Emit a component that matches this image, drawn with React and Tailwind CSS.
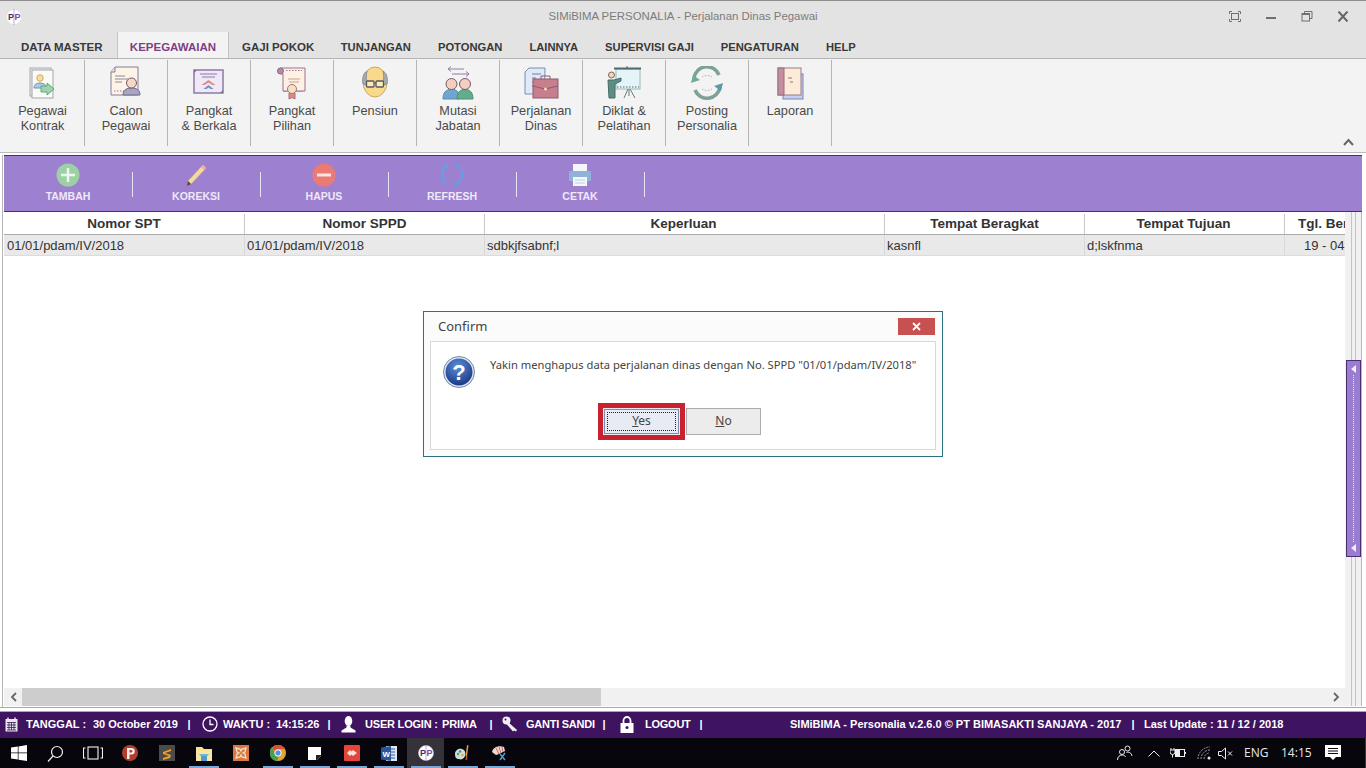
import React from "react";

const I = ({ w = 36, h = 36, vb, className = "", children }) => (
  <svg width={w} height={h} viewBox={vb || `0 0 ${w} ${h}`} className={"shrink-0 " + className} fill="none">
    {children}
  </svg>
);

const PegawaiKontrak = () => (
  <I w={36} h={34}>
    <rect x="5" y="2" width="21" height="28" fill="#e6e9ea" stroke="#a9acb0" />
    <rect x="7" y="4" width="21" height="28" fill="#fbfbf6" stroke="#9fa6ad" />
    <circle cx="15" cy="12" r="3.2" fill="#f5dfa8" stroke="#d3a94f" />
    <path d="M9 22c0-4 3-5 6-5s5 1 6 3l-1 2z" fill="#a8cbe4" stroke="#6d96b8" />
    <path d="M16 20h6v-3l7 6-7 6v-3h-6z" fill="#9fd3ac" stroke="#62a47c" />
  </I>
);
const CalonPegawai = () => (
  <I w={36} h={34}>
    <path d="M7 1h23v28H3V6z" fill="#fdf3e7" stroke="#8a7a96" />
    <path d="M7 1v5H3" fill="#e8e2ee" stroke="#8a7a96" />
    <path d="M7 10h10M7 13h13M7 16h7" stroke="#8a8a9a" />
    <path d="M6 25h10" stroke="#8a7a96" strokeDasharray="1.5 1.5" />
    <path d="M15 29c0-5 3-6 6-7h5c3 1 6 2 6 7z" fill="#a9a4c0" stroke="#6e6a88" />
    <circle cx="23.500" cy="17" r="5" fill="#f4d8c8" stroke="#6e5a66" />
  </I>
);
const PangkatBerkala = () => (
  <I w={36} h={30}>
    <rect x="3" y="2" width="29" height="23" fill="#efe9f7" stroke="#8d7aa8" strokeWidth="1.500" />
    <path d="M9 6h17M11 9h13" stroke="#8d7aa8" />
    <path d="M17.500 12l7 5-3 0-4-2.500-4 2.500-3 0z" fill="#d98a82" />
    <path d="M17.500 17l5 4h-3l-2-1.500-2 1.500h-3z" fill="#6a93c6" />
    <path d="M29 25h3v-3zM3 5V2h3z" fill="#7d6a8e" />
  </I>
);
const PangkatPilihan = () => (
  <I w={36} h={34}>
    <path d="M7 2h24v23H9" fill="#fdf1e6" stroke="#a0708c" />
    <path d="M7 2a3 3 0 0 0-3 3c0 2 2 3 5 3V25h20" fill="#fdf1e6" stroke="#a0708c" />
    <circle cx="6.500" cy="5" r="3" fill="#b58aa6" stroke="#8c6a8c" />
    <path d="M12 4.500h16" stroke="#a0708c" strokeDasharray="1.500 1.500" />
    <path d="M14 13h12M15 16h10" stroke="#d0a080" />
    <path d="M15 27h6v6l-3-1.500-3 1.500z" fill="#e08a80" stroke="#a0708c" />
    <circle cx="18" cy="23" r="4.500" fill="#f7e2c0" stroke="#a0708c" />
  </I>
);
const Pensiun = () => (
  <I w={30} h={34}>
    <ellipse cx="15" cy="16" rx="12" ry="15" fill="#f9d98c" stroke="#c9a85e" />
    <path d="M3 18c-1-8 1-11 4-13-1 4-1 9 0 14zM27 18c1-8-1-11-4-13 1 4 1 9 0 14z" fill="#a5aeb0" stroke="#8a8f90" />
    <rect x="6.500" y="15" width="7.500" height="6" rx="1" stroke="#55585c" strokeWidth="1.300" fill="#fce9b8" />
    <rect x="16" y="15" width="7.500" height="6" rx="1" stroke="#55585c" strokeWidth="1.300" fill="#fce9b8" />
    <path d="M14 17h2" stroke="#55585c" />
  </I>
);
const Mutasi = () => (
  <I w={36} h={36}>
    <path d="M8 4h16M8 4l3-2.500M8 4l3 2.500" stroke="#8a8496" />
    <path d="M12 9h17M29 9l-3-2.500M29 9l-3 2.500" stroke="#8a78b0" />
    <path d="M3 34c0-7 3-9 8-10 4 0 7 2 8 5v5z" fill="#6ea6cf" stroke="#5e8eae" />
    <path d="M17 34c0-7 3-9 8-10 5 1 8 3 8 10z" fill="#62ad8d" stroke="#4e9275" />
    <circle cx="11.500" cy="19" r="5.500" fill="#f2cfc0" stroke="#7b5a60" />
    <circle cx="25" cy="19" r="5.500" fill="#f2cfc0" stroke="#7b5a60" />
  </I>
);
const PerjalananIcon = () => (
  <I w={36} h={34}>
    <path d="M6 2h16l-.5 26H2V6z" fill="#dfe9f8" stroke="#7b8eae" />
    <path d="M9 8h9M9 12h4M9 16h4M9 20h4" stroke="#6d7f9e" />
    <rect x="10" y="13" width="25" height="19" fill="#c77f8e" stroke="#8d5a6e" />
    <path d="M18 13v-3h9v3" stroke="#8d5a6e" />
    <path d="M10 20l12 3 13-3" stroke="#8d5a6e" />
    <circle cx="22.500" cy="23" r="1.500" fill="#f5dfa8" />
  </I>
);
const Diklat = () => (
  <I w={36} h={34}>
    <rect x="10" y="3" width="24" height="20" fill="#e4f4f8" stroke="#99bbbb" />
    <path d="M8 2.500h27" stroke="#4e6a68" strokeWidth="2" />
    <path d="M21 0v3" stroke="#4e6a68" />
    <path d="M11 21h22" stroke="#4e6a68" strokeDasharray="1.500 1.500" />
    <path d="M22 23l-4 9M24 23l5 9M23 23v7" stroke="#6a7a78" />
    <circle cx="5.500" cy="9" r="3" fill="#f2d6bc" stroke="#7a6a5a" />
    <path d="M2 14h6l7-2v3l-6 3v14H3z" fill="#5d8c84" stroke="#446e68" />
  </I>
);
const Posting = () => (
  <I w={34} h={34}>
    <path d="M4 12a13 13 0 0 1 25-3" stroke="#7da099" strokeWidth="3.500" />
    <path d="M30 21a13 13 0 0 1-25 3" stroke="#7da099" strokeWidth="3.500" />
    <path d="M1 17l2-8 7 5z" fill="#6bae95" />
    <path d="M33 17l-2 8-7-5z" fill="#5e9aa6" />
    <path d="M12 11a9 9 0 0 1 10 0M12 23a9 9 0 0 0 10 0" stroke="#a0a8a8" strokeDasharray="1.500 1.500" />
  </I>
);
const Laporan = () => (
  <I w={30} h={34}>
    <rect x="8" y="8" width="20" height="25" fill="#c6cff0" stroke="#7a86b0" />
    <rect x="3" y="2" width="23" height="27" fill="#fcebd8" stroke="#9a7a8a" />
    <rect x="3" y="2" width="6" height="27" fill="#c58ea0" stroke="#9a6a80" />
    <path d="M13 12h4M15 16h3" stroke="#8a7a7a" />
  </I>
);

const ribbon = [
  ["Pegawai", "Kontrak", PegawaiKontrak, "w-[84px]"],
  ["Calon", "Pegawai", CalonPegawai, "w-[83px]"],
  ["Pangkat", "& Berkala", PangkatBerkala, "w-[83px]"],
  ["Pangkat", "Pilihan", PangkatPilihan, "w-[83px]"],
  ["Pensiun", "", Pensiun, "w-[83px]"],
  ["Mutasi", "Jabatan", Mutasi, "w-[83px]"],
  ["Perjalanan", "Dinas", PerjalananIcon, "w-[83px]"],
  ["Diklat &", "Pelatihan", Diklat, "w-[83px]"],
  ["Posting", "Personalia", Posting, "w-[83px]"],
  ["Laporan", "", Laporan, "w-[83px]"],
];

const tabs = ["GAJI POKOK", "TUNJANGAN", "POTONGAN", "LAINNYA", "SUPERVISI GAJI", "PENGATURAN", "HELP"];

const Logo = ({ s = 16 }) => (
  <svg width={s} height={s} viewBox="0 0 16 16" className="shrink-0">
    <circle cx="8" cy="8" r="7.500" fill="#fff" stroke="#e0d8e8" strokeWidth="0.500" />
    <path d="M8 0.500V15.500" stroke="#6a3f8e" strokeWidth="0.700" strokeDasharray="1.200 0.800" />
    <text x="2" y="11" fontSize="9" fontWeight="700" fontFamily="Liberation Sans" fill="#4a2a6e">P</text>
    <text x="8.500" y="11" fontSize="9" fontWeight="700" fontFamily="Liberation Sans" fill="#7b4aa0">P</text>
  </svg>
);

const ToolBtn = ({ label, children }) => (
  <div className="w-[128px] h-full flex flex-col items-center relative">
    <div className="h-[24px] mt-[7px] flex items-center justify-center">{children}</div>
    <div className="mt-[2px] text-[10.500px] leading-[14px] font-bold text-[#efe8f8]">{label}</div>
  </div>
);

const ToolSep = () => <div className="w-px h-[25px] bg-[#e8e2f2] self-center shrink-0 -mr-px mt-[2px]" />;

const Task = ({ children, active, bar }) => (
  <div className={"w-[37px] h-[30px] relative flex items-center justify-center " + (active ? "bg-[#35323a]" : "")}>
    {children}
    {bar && <div className="absolute left-[4px] right-[3px] bottom-0 h-[2px] bg-[#78a6d6]" />}
  </div>
);

const StatusSep = ({ cls }) => <span className={"text-center " + cls}>|</span>;

export default function App() {
  return (
    <div className="w-[1366px] h-[768px] relative flex flex-col overflow-hidden bg-[#f3f3f3] text-[#333] [font-family:'Liberation_Sans',Arial,sans-serif]">
      {/* Title bar */}
      <div className="h-[32px] shrink-0 bg-[#e3e3e3] border-t border-[#8e8e8e] flex items-center pl-[6px] pr-[17px] relative">
        <Logo s={16} />
        <div className="absolute inset-x-0 top-[8px] text-center text-[11.400px] leading-[15px] text-[#7b7b7b]">
          SIMiBIMA PERSONALIA - Perjalanan Dinas Pegawai
        </div>
        <div className="ml-auto flex items-center gap-[24px]">
          <svg width="12" height="11" viewBox="0 0 12 11" fill="none" stroke="#6f6f6f"><path d="M0.500 3V0.500H3M9 0.500h2.500V3M11.500 8v2.500H9M3 10.500H0.500V8" /><rect x="2.500" y="2.500" width="7" height="6" /></svg>
          <svg width="12" height="11" viewBox="0 0 12 11" fill="none" stroke="#6f6f6f" strokeWidth="2"><path d="M1 7h10" /></svg>
          <svg width="12" height="11" viewBox="0 0 12 11" fill="none" stroke="#6f6f6f"><rect x="1" y="2.500" width="7.500" height="7.500" /><path d="M3.500 2.500V0.500h7.500v7h-2.500" /><path d="M1 3.500h7.500" /></svg>
          <svg width="12" height="11" viewBox="0 0 12 11" fill="none" stroke="#666" strokeWidth="2"><path d="M1.500 0.500l9 10M10.500 0.500l-9 10" /></svg>
        </div>
      </div>

      {/* Tabs */}
      <div className="h-[27px] shrink-0 bg-[#e3e3e3] border-b border-[#b4b4b4] flex pl-[8px] text-[11.500px] font-bold text-[#383838]">
        <div className="w-[109px] pl-[13px] pt-[7px] whitespace-nowrap">DATA MASTER</div>
        <div className="w-[112px] h-[27px] bg-[#f3f3f3] border border-b-0 border-[#c4c4c4] text-center pt-[7px] text-[#7d3f86] -mt-px">KEPEGAWAIAN</div>
        <div className="pl-[13px] pr-[13px] pt-[7px] whitespace-nowrap">{tabs[0]}</div>
        {tabs.slice(1).map((t) => (
          <div key={t} className="px-[13.500px] pt-[7px] whitespace-nowrap text-[11.200px]">{t}</div>
        ))}
      </div>

      {/* Ribbon */}
      <div className="h-[94px] shrink-0 bg-[#f3f3f3] border-b border-[#b9b9b9] flex pl-px pt-px">
        {ribbon.map(([a, b, Ic, w]) => (
          <div key={a + b} className={"h-[86px] border-r border-[#b5b5b5] flex flex-col items-center text-[12.700px] leading-[15px] text-[#4a4a4a] " + w}>
            <div className="h-[38px] mt-[4px] flex items-center justify-center"><Ic /></div>
            <div className="mt-[2px]">{a}</div>
            {b && <div>{b}</div>}
          </div>
        ))}
        <div className="ml-auto mr-[12px] self-end mb-[6px]">
          <svg width="11" height="8" viewBox="0 0 11 8" fill="none" stroke="#666" strokeWidth="2"><path d="M1 7l4.500-5L10 7" /></svg>
        </div>
      </div>

      {/* Main */}
      <div className="flex-1 min-h-0 flex flex-col bg-white pl-[2px] pr-[2px] pt-[2px]">
        <div className="flex-1 min-h-0 flex flex-col border-l border-[#b4b4b4] pl-px pr-[2px]">
          <div className="h-[57px] shrink-0 bg-[#9e80d0] border-y border-[#4b2d70] flex">
            <ToolBtn label="TAMBAH">
              <svg width="24" height="24" viewBox="0 0 24 24"><circle cx="12" cy="12" r="11.500" fill="#9dd1a4" /><path d="M12 5v14M5 12h14" stroke="#eef8ee" strokeWidth="2.500" /></svg>
            </ToolBtn>
            <ToolSep />
            <ToolBtn label="KOREKSI">
              <svg width="24" height="24" viewBox="0 0 24 24"><path d="M4 18L19 2l3 3L7 21z" fill="#f3d9a0" stroke="#d9bf88" strokeWidth="0.500" /><path d="M19 2l3 3-2 2-3-3z" fill="#f2a9a0" /><path d="M4 18l3 3-4 2z" fill="#5a4a40" /></svg>
            </ToolBtn>
            <ToolSep />
            <ToolBtn label="HAPUS">
              <svg width="24" height="24" viewBox="0 0 24 24"><circle cx="12" cy="12" r="11.500" fill="#ea7a74" /><path d="M5 12h14" stroke="#f9e4e0" strokeWidth="3" /></svg>
            </ToolBtn>
            <ToolSep />
            <ToolBtn label="REFRESH">
              <svg width="24" height="24" viewBox="0 0 24 24" fill="none" stroke="#5da2e6" strokeWidth="1.800"><path d="M6 3.500a11 11 0 0 0 0 17" /><path d="M14 1.500a10.500 10.500 0 0 1 2 20" /><path d="M4 1.500l3 1-.5 3M18 23l-3-1 .5-3" /></svg>
            </ToolBtn>
            <ToolSep />
            <ToolBtn label="CETAK">
              <svg width="24" height="24" viewBox="0 0 24 24"><rect x="5" y="1" width="14" height="8" fill="#f4f6fa" /><rect x="1" y="8" width="22" height="10" rx="1" fill="#8fb3d8" /><rect x="5" y="14" width="14" height="9" fill="#f4f6fa" /><path d="M7 17h10M7 20h10" stroke="#c4cedc" /></svg>
            </ToolBtn>
            <ToolSep />
          </div>

          <div className="flex-1 min-h-0 flex">
            <div className="w-[1341px] shrink-0 flex flex-col">
              <div className="h-[23px] shrink-0 flex border-b border-[#aaaaaa] bg-white text-[13.500px] font-bold text-[#333] leading-[20px] pt-[2px]">
                <div className="w-[241px] shrink-0 text-center border-r border-[#c8c8c8]">Nomor SPT</div>
                <div className="w-[240px] shrink-0 text-center border-r border-[#c8c8c8]">Nomor SPPD</div>
                <div className="w-[400px] shrink-0 text-center border-r border-[#c8c8c8] pr-[2px]">Keperluan</div>
                <div className="w-[200px] shrink-0 text-center border-r border-[#c8c8c8]">Tempat Beragkat</div>
                <div className="w-[200px] shrink-0 text-center border-r border-[#c8c8c8] pr-[2px]">Tempat Tujuan</div>
                <div className="flex-1 overflow-hidden whitespace-nowrap pl-[13px]">Tgl. Berangkat</div>
              </div>
              <div className="h-[21px] shrink-0 flex border-b border-[#dcdcdc] bg-[#e9e9e9] text-[13px] text-[#333] leading-[21px]">
                <div className="w-[241px] shrink-0 pl-[3px] border-r border-[#d8d8d8]">01/01/pdam/IV/2018</div>
                <div className="w-[240px] shrink-0 pl-[2px] border-r border-[#d8d8d8]">01/01/pdam/IV/2018</div>
                <div className="w-[400px] shrink-0 pl-[2px] border-r border-[#d8d8d8]">sdbkjfsabnf;l</div>
                <div className="w-[200px] shrink-0 pl-[2px] border-r border-[#d8d8d8]">kasnfl</div>
                <div className="w-[200px] shrink-0 pl-[2px] border-r border-[#d8d8d8]">d;lskfnma</div>
                <div className="flex-1 overflow-hidden whitespace-nowrap pl-[19px]">19 - 04 - 2018</div>
              </div>
              <div className="flex-1" />
              <div className="h-[18px] shrink-0 bg-[#f1f1f1] flex items-center mb-px">
                <div className="w-[18px] flex justify-center">
                  <svg width="7" height="10" viewBox="0 0 7 10" fill="none" stroke="#666" strokeWidth="1.800"><path d="M6 1L2 5l4 4" /></svg>
                </div>
                <div className="w-[579px] h-full bg-[#cdcdcd]" />
                <div className="ml-auto w-[18px] flex justify-center">
                  <svg width="7" height="10" viewBox="0 0 7 10" fill="none" stroke="#666" strokeWidth="1.800"><path d="M1 1l4 4-4 4" /></svg>
                </div>
              </div>
            </div>
            <div className="flex-1 bg-[#f1f1f1] border-r border-[#b8b8b8] flex justify-center relative mb-px">
              <div className="w-px h-full bg-[#c4c4c4] mr-[3px]" />
              <div className="w-px h-full bg-[#c4c4c4]" />
              <div className="absolute left-[1px] top-[148px] w-[15px] h-[197px] bg-[#9a7dd0] border border-[#4b2d70] flex flex-col items-center justify-between py-[4px]">
                <svg width="5" height="8" viewBox="0 0 5 8"><path d="M5 0v8L0 4z" fill="#f2edf8" /></svg>
                <div className="w-px flex-1 my-[2px] border-l border-dotted border-[#eee8f8]" />
                <svg width="5" height="8" viewBox="0 0 5 8"><path d="M5 0v8L0 4z" fill="#f2edf8" /></svg>
              </div>
            </div>
          </div>
        </div>
        <div className="h-[5px] shrink-0 border-y border-[#a8a8a8] bg-white -mx-[2px]" />
      </div>

      {/* Status bar */}
      <div className="h-[26px] pb-[2px] shrink-0 bg-[#3e1360] text-white text-[11px] font-bold flex items-center whitespace-nowrap leading-[14px]">
        <div className="w-[790px] shrink-0 flex items-center pl-[5px]">
          <svg width="13" height="15" viewBox="0 0 13 15" className="shrink-0"><rect x="0.500" y="2" width="12" height="12.500" fill="#e8e6ec" /><path d="M3 0.500v3M10 0.500v3" stroke="#e8e6ec" strokeWidth="1.500" /><path d="M2 5.500h9M2 8h9M2 10.500h9M2 13h9M4 5.500v7.500M6.500 5.500v7.500M9 5.500v7.500" stroke="#3e1360" strokeWidth="0.800" /></svg>
          <span className="w-[67px] ml-[8px] shrink-0">TANGGAL :</span>
          <span className="w-[90px] shrink-0">30 October 2019</span>
          <StatusSep cls="w-[12px] shrink-0" />
          <svg width="16" height="16" viewBox="0 0 16 16" fill="none" stroke="#fff" strokeWidth="1.300" className="shrink-0 ml-[7px]"><circle cx="8" cy="8" r="7" /><path d="M8 3.500V8.500h3.500" /></svg>
          <span className="w-[53px] ml-[5px] shrink-0">WAKTU :</span>
          <span className="w-[48px] shrink-0 tracking-[-0.1px]">14:15:26</span>
          <StatusSep cls="w-[10px] shrink-0" />
          <svg width="15" height="17" viewBox="0 0 15 17" fill="#fff" className="shrink-0 ml-[7px]"><ellipse cx="7.500" cy="5" rx="3.800" ry="5" /><path d="M5.500 9.500h4v2l5 3v2H0.500v-2l5-3z" /></svg>
          <span className="w-[77px] ml-[9px] shrink-0 tracking-[-0.2px]">USER LOGIN :</span>
          <span className="w-[44px] shrink-0 tracking-[-0.1px]">PRIMA</span>
          <StatusSep cls="w-[10px] shrink-0" />
          <svg width="16" height="16" viewBox="0 0 16 16" className="shrink-0 ml-[6px]"><circle cx="4.500" cy="4.500" r="4" fill="#f0f0f0" /><path d="M6 6l9 8-1 1.500-2-1-1 1L4.500 8z" fill="#f0f0f0" /><circle cx="3.500" cy="3.500" r="1" fill="#3e1360" /></svg>
          <span className="w-[73px] ml-[8px] shrink-0 tracking-[-0.25px]">GANTI SANDI</span>
          <StatusSep cls="w-[10px] shrink-0" />
          <svg width="14" height="17" viewBox="0 0 14 17" className="shrink-0 ml-[11px]"><path d="M3.500 7V4.500a3.500 3.500 0 0 1 7 0V7" fill="none" stroke="#fff" strokeWidth="1.800" /><rect x="0.500" y="7" width="13" height="10" fill="#fff" /><circle cx="7" cy="11.500" r="1.500" fill="#3e1360" /></svg>
          <span className="w-[51px] ml-[11px] shrink-0 tracking-[-0.25px]">LOGOUT</span>
          <StatusSep cls="w-[10px] shrink-0" />
        </div>
        <span className="w-[338px] shrink-0">SIMiBIMA - Personalia v.2.6.0 © PT BIMASAKTI SANJAYA - 2017</span>
        <StatusSep cls="w-[10px] shrink-0" />
        <span className="ml-[6px]">Last Update : 11 / 12 / 2018</span>
      </div>

      {/* Taskbar */}
      <div className="h-[30px] shrink-0 bg-[#07060c] flex items-center text-white">
        <Task><svg width="16" height="16" viewBox="0 0 16 16" fill="#fff"><path d="M0 2.500l6.800-1v6H0zM7.500 1.400L16 0v7.500H7.500zM0 8.300h6.800v6.200L0 13.500zM7.500 8.300H16V16l-8.500-1.300z" /></svg></Task>
        <Task><svg width="17" height="17" viewBox="0 0 17 17" fill="none" stroke="#f2f2f2" strokeWidth="1.200"><circle cx="10" cy="7" r="5.500" /><path d="M6 11l-5 5.500" /></svg></Task>
        <Task><svg width="20" height="14" viewBox="0 0 20 14" fill="none" stroke="#f2f2f2" strokeWidth="1.100"><rect x="5" y="1" width="10" height="12" /><path d="M2.500 2H0.500V12H2.500M17.500 2h2V12h-2" /></svg></Task>
        <Task><svg width="16" height="16" viewBox="0 0 16 16"><circle cx="8" cy="8" r="8" fill="#b03e2e" /><path d="M5 14V3h4.500a3 3 0 0 1 0 6.500H7.500V14z" fill="#f7e9e4" /><path d="M7.500 5v2.500h1.500a1.200 1.200 0 0 0 0-2.500z" fill="#b03e2e" /></svg></Task>
        <Task bar={false}><svg width="16" height="16" viewBox="0 0 16 16"><rect width="16" height="16" fill="#4b4b4b" /><path d="M4 7l8-3v2L6 8l6 2-1 3-7 2v-2l6-2-6-2z" fill="#f39c26" /></svg></Task>
        <Task bar><svg width="16" height="15" viewBox="0 0 16 15"><path d="M0 1h6l2 2h8v12H0z" fill="#f7e08e" /><path d="M0 5h16v10H0z" fill="#f9e7a6" /><path d="M5 15v-4a3 3 0 0 1 6 0v4z" fill="#4f9bc8" /><path d="M3 8h10l-1.500 2h-7z" fill="#70b6d8" /></svg></Task>
        <Task><svg width="16" height="16" viewBox="0 0 16 16"><rect width="16" height="16" fill="#d8783f" /><path d="M3 3l4 1 1 2 1-2 4-1-1 4-2 1 2 1 1 4-4-1-1-2-1 2-4 1 1-4 2-1-2-1z" fill="none" stroke="#f4ddc8" strokeWidth="1.300" /></svg></Task>
        <Task bar><svg width="16" height="16" viewBox="0 0 16 16"><circle cx="8" cy="8" r="8" fill="#e0a62e" /><path d="M8 0a8 8 0 0 1 7 4H8a4 4 0 0 0-3.500 2L2 2.200A8 8 0 0 1 8 0z" fill="#d9503f" /><path d="M2 2.200L5 8a3 3 0 0 0 4 3l-2 5A8 8 0 0 1 2 2.200z" fill="#4a9e50" /><circle cx="8" cy="8" r="3.200" fill="#5790dc" stroke="#fff" /></svg></Task>
        <Task bar><svg width="13" height="13" viewBox="0 0 13 13"><path d="M0 0h13v9l-4 4H0z" fill="#fff" /><path d="M13 8v1l-4 4H8V8z" fill="#222" /></svg></Task>
        <Task bar><svg width="16" height="16" viewBox="0 0 16 16"><rect width="16" height="16" rx="1" fill="#e4463c" /><path d="M3 8l3-3 1.500 1.500L9 5l4 3-4 3-1.500-1.500L6 11z" fill="#fbe0dc" /></svg></Task>
        <Task bar><svg width="16" height="15" viewBox="0 0 16 15"><rect x="5" width="11" height="15" fill="#dfe6f2" /><path d="M10 3h4M10 6h4M10 9h4M10 12h4" stroke="#2f5c9e" /><path d="M0 1.500L10 0v15L0 13.500z" fill="#2b579a" /><text x="1.500" y="11" fontSize="8" fontWeight="700" fontFamily="Liberation Sans" fill="#fff">W</text></svg></Task>
        <Task active bar><Logo s={16} /></Task>
        <Task bar><svg width="17" height="16" viewBox="0 0 17 16"><path d="M1 9c0-4 4-6 7-5 3 1 4 4 3 7-1 3-4 4-6 3-3 0-4-2-4-5z" fill="#cfdcd8" /><circle cx="4" cy="9" r="1.200" fill="#4a9e7a" /><circle cx="6" cy="6.500" r="1.200" fill="#4a7eae" /><circle cx="8.500" cy="10" r="1.200" fill="#e0a62e" /><path d="M13 0l1.500.5L13 11h-1.500z" fill="#d9a03e" /><path d="M12 11h1.500l-.5 4h-1.500z" fill="#c0503e" /></svg></Task>
        <Task bar><svg width="18" height="16" viewBox="0 0 18 16"><path d="M1 7c1-5 7-7 12-5l1 4-6 3-3 1z" fill="#f0d8d0" /><path d="M5 3l3 6M8 2l2 6M11 2l1 5" stroke="#c06a60" /><path d="M9 9l5 6M14 8l-5 7" stroke="#4a9ed0" strokeWidth="1.500" /></svg></Task>

        <div className="ml-auto flex items-center h-full relative text-[#e8e8e8]">
          <svg width="16" height="16" viewBox="0 0 16 16" fill="none" stroke="#ececec" strokeWidth="1"><circle cx="10.500" cy="3.500" r="2.500" /><circle cx="5" cy="7" r="2.500" /><path d="M0.500 15c0-3 2-5 4.500-5s3 1 3.500 2M9.500 7.500c2.500-1 5 .5 5.500 3.500" /></svg>
          <svg width="12" height="7" viewBox="0 0 12 7" fill="none" stroke="#ececec" className="ml-[15px]"><path d="M0.500 6.500L6 1l5.500 5.500" /></svg>
          <svg width="16" height="12" viewBox="0 0 16 12" fill="none" stroke="#ececec" className="ml-[10px]"><rect x="5.500" y="2.500" width="9" height="7" /><path d="M15.500 5v2" /><rect x="6.500" y="3.500" width="3" height="5" fill="#ececec" /><path d="M1 1v2M4 1v2M0 3h5v2a2.500 2.500 0 0 1-5 0zM2.500 7.500v3" /></svg>
          <svg width="14" height="14" viewBox="0 0 14 14" fill="none" stroke="#9a9a9a" className="ml-[11px]"><path d="M1 13a12 12 0 0 1 12-12M4 13a9 9 0 0 1 9-9M7 13a6 6 0 0 1 5-6" strokeDasharray="2 1" /><circle cx="12" cy="12" r="1.500" fill="#ececec" stroke="none" /></svg>
          <svg width="16" height="13" viewBox="0 0 16 13" fill="none" stroke="#ececec" className="ml-[7px]"><path d="M0.500 4.500h3l4-3.500v11l-4-3.500h-3zM10 4.500l4 4M14 4.500l-4 4" /></svg>
          <span className="ml-[10px] text-[12px] font-normal [font-family:'Open_Sans',sans-serif] w-[24px]">ENG</span>
          <span className="ml-[13px] text-[12px] font-normal [font-family:'Open_Sans',sans-serif] w-[28px]">14:15</span>
          <svg width="16" height="16" viewBox="0 0 16 16" className="ml-[16px] mr-[25px]"><path d="M0 0h16v12h-5l-3 3-3-3H0z" fill="#fff" /><path d="M3 3.500h10M3 6h10M3 8.500h10" stroke="#07060c" /></svg>
          <div className="absolute right-0 top-0 h-full w-px bg-[#3a3a3a]" />
        </div>
      </div>

      {/* Confirm dialog */}
      <div className="absolute left-[423px] top-[311px] w-[520px] h-[146px] bg-[#fbfbfb] border border-[#2d6f80] [font-family:'Noto_Sans',sans-serif]">
        <div className="h-[29px] flex items-center pl-[14px] text-[13px] text-[#444]">
          Confirm
          <div className="absolute right-[7px] top-[6px] w-[37px] h-[17px] bg-[#c75050] flex items-center justify-center">
            <svg width="9" height="9" viewBox="0 0 9 9" stroke="#fff" strokeWidth="1.800"><path d="M1 1l7 7M8 1L1 8" /></svg>
          </div>
        </div>
        <div className="mx-[6px] h-[109px] bg-white border border-[#dcd6d6] relative">
          <div className="flex pl-[12px] pt-[14px]">
            <svg width="32" height="32" viewBox="0 0 32 32" className="shrink-0">
              <defs>
                <radialGradient id="qg" cx="45%" cy="30%" r="75%">
                  <stop offset="0%" stopColor="#5b8fdc" />
                  <stop offset="100%" stopColor="#17347e" />
                </radialGradient>
              </defs>
              <circle cx="16" cy="16" r="15.500" fill="#dfe6f2" stroke="#7286a8" />
              <circle cx="16" cy="16" r="13.500" fill="url(#qg)" />
              <text x="16" y="24" textAnchor="middle" fontSize="22" fontWeight="700" fontFamily="Liberation Sans" fill="#fff">?</text>
            </svg>
            <div className="ml-[15px] text-[11.200px] leading-[17px] text-[#444] whitespace-nowrap">
              Yakin menghapus data perjalanan dinas dengan No. SPPD "01/01/pdam/IV/2018"
            </div>
          </div>
          <div className="absolute left-[167px] top-[61px] flex items-start">
            <div className="w-[87px] h-[37px] border-[5px] border-[#c9212d] bg-[#e8ebf4] p-px">
              <div className="h-full border border-[#7d8cb0] p-[2px]">
                <div className="h-full border border-dotted border-[#222] flex items-center justify-center text-[12px] text-[#444] pb-[2px]">
                  <span><span className="underline">Y</span>es</span>
                </div>
              </div>
            </div>
            <div className="w-[75px] h-[27px] mt-[5px] ml-px border border-[#acacac] bg-[#ececec] flex items-center justify-center text-[12px] text-[#444] pb-[2px]">
              <span><span className="underline">N</span>o</span>
            </div>
          </div>
        </div>
      </div>
    </div>
  );
}
